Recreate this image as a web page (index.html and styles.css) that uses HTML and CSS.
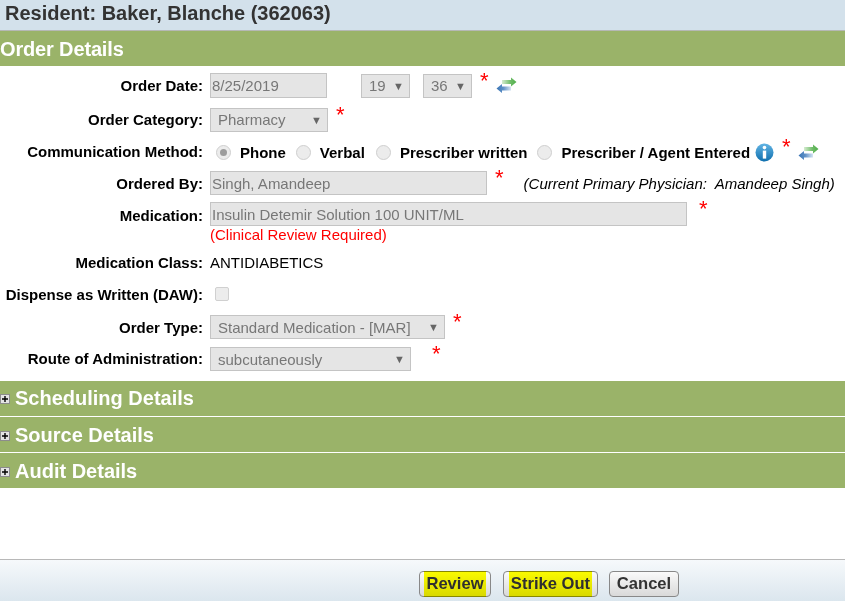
FILE: index.html
```html
<!DOCTYPE html>
<html lang="en">
<head>
  <meta charset="UTF-8">
  <title>Order Details</title>
  <link rel="stylesheet" href="styles.css">
</head>
<body>
  <svg class="defs" width="0" height="0">
    <defs>
      <linearGradient id="greenFade" x1="0" x2="1" y1="0" y2="0">
        <stop offset="0" stop-color="#d5ecd0"/>
        <stop offset="0.6" stop-color="#6dbb66"/>
        <stop offset="1" stop-color="#4eae4a"/>
      </linearGradient>
      <linearGradient id="blueFade" x1="0" x2="1" y1="0" y2="0">
        <stop offset="0" stop-color="#3a74b4"/>
        <stop offset="0.45" stop-color="#5d8fc6"/>
        <stop offset="1" stop-color="#d6e4f2"/>
      </linearGradient>
      <linearGradient id="infoFill" x1="0" x2="0" y1="0" y2="1">
        <stop offset="0" stop-color="#62b4e4"/>
        <stop offset="1" stop-color="#0f6fae"/>
      </linearGradient>
      <symbol id="swap" viewBox="0 0 22 18">
        <path d="M6 4h9V1.5l5.5 4.5-5.5 4.5V8H6z" fill="url(#greenFade)"/>
        <path d="M15 10.5H6V8L0.5 12.5 6 17v-2.5h9z" fill="url(#blueFade)"/>
      </symbol>
      <symbol id="plus" viewBox="0 0 10 10">
        <rect x="0.5" y="0.5" width="9" height="9" fill="#e4e4e4" stroke="#8c8c8c"/>
        <path d="M2 5h6M5 2v6" stroke="#000" stroke-width="1.4"/>
      </symbol>
    </defs>
  </svg>

  <header class="resident">Resident: Baker, Blanche (362063)</header>

  <section class="panel-head open low">Order Details</section>

  <form class="order-form">
    <div class="row row-date">
      <label>Order Date:</label>
      <div class="field">
        <input class="txt w-date" type="text" value="8/25/2019" disabled>
        <div class="sel w-time first"><span>19</span><i>▼</i></div>
        <div class="sel w-time"><span>36</span><i>▼</i></div>
        <span class="req up">*</span>
        <svg class="swap" width="22" height="18"><use href="#swap"/></svg>
      </div>
    </div>
    <div class="row row-cat">
      <label>Order Category:</label>
      <div class="field">
        <div class="sel w-cat"><span>Pharmacy</span><i>▼</i></div>
        <span class="req up">*</span>
      </div>
    </div>
    <div class="row row-comm">
      <label>Communication Method:</label>
      <div class="field radios">
        <span class="radio on"></span><b class="r1">Phone</b>
        <span class="radio"></span><b class="r2">Verbal</b>
        <span class="radio"></span><b class="r3">Prescriber written</b>
        <span class="radio"></span><b class="r4">Prescriber / Agent Entered</b>
        <svg class="info" width="19" height="19" viewBox="0 0 19 19">
          <circle cx="9.5" cy="9.5" r="9" fill="url(#infoFill)"/>
          <circle cx="9.5" cy="4.6" r="1.8" fill="#fff"/>
          <rect x="7.8" y="7.6" width="3.4" height="8" fill="#fff"/>
        </svg>
        <span class="req up">*</span>
        <svg class="swap" width="22" height="18"><use href="#swap"/></svg>
      </div>
    </div>
    <div class="row row-by">
      <label>Ordered By:</label>
      <div class="field">
        <input class="txt w-by" type="text" value="Singh, Amandeep" disabled>
        <span class="req up">*</span>
        <em class="note">(Current Primary Physician:&nbsp; Amandeep Singh)</em>
      </div>
    </div>
    <div class="row row-med">
      <label>Medication:</label>
      <div class="field">
        <input class="txt w-med" type="text" value="Insulin Detemir Solution 100 UNIT/ML" disabled>
        <span class="req up far">*</span>
      </div>
    </div>
    <div class="row row-review">
      <label></label>
      <div class="field clinical">(Clinical Review Required)</div>
    </div>
    <div class="row row-class">
      <label>Medication Class:</label>
      <div class="field plain">ANTIDIABETICS</div>
    </div>
    <div class="row row-daw">
      <label>Dispense as Written (DAW):</label>
      <div class="field"><span class="check"></span></div>
    </div>
    <div class="row row-type">
      <label>Order Type:</label>
      <div class="field">
        <div class="sel w-type"><span>Standard Medication - [MAR]</span><i>▼</i></div>
        <span class="req up">*</span>
      </div>
    </div>
    <div class="row row-route">
      <label>Route of Administration:</label>
      <div class="field">
        <div class="sel w-route"><span>subcutaneously</span><i>▼</i></div>
        <span class="req up wide">*</span>
      </div>
    </div>
  </form>

  <section class="panel-head"><svg width="10" height="10"><use href="#plus"/></svg>Scheduling Details</section>
  <section class="panel-head low"><svg width="10" height="10"><use href="#plus"/></svg>Source Details</section>
  <section class="panel-head low"><svg width="10" height="10"><use href="#plus"/></svg>Audit Details</section>

  <footer class="actions">
    <button type="button" class="btn b-review"><span class="mark">Review</span></button>
    <button type="button" class="btn b-strike"><span class="mark">Strike Out</span></button>
    <button type="button" class="btn b-cancel">Cancel</button>
  </footer>
</body>
</html>
```

FILE: styles.css
```css
html, body { height: 100%; }
body { margin: 0; font-family: "Liberation Sans", Arial, sans-serif; font-size: 15px; color: #000; background: #fff; display: flex; flex-direction: column; overflow: hidden; }
.defs { position: absolute; }

.resident { height: 30px; line-height: 27px; padding-left: 5px; background: #d3e1eb; border-bottom: 1px solid #b5b8b5; color: #333; font-size: 20px; font-weight: bold; flex: none; }

.panel-head { flex: none; box-sizing: border-box; height: 35px; margin-bottom: 1px; background: #9ab369; color: #fff; font-size: 20px; font-weight: bold; display: flex; align-items: center; }
.panel-head svg { margin-right: 5px; }
.panel-head.low { padding-top: 2px; }
.panel-head.open { margin-bottom: 0; letter-spacing: -0.15px; }

.order-form { flex: none; height: 315px; box-sizing: border-box; }
.row { display: grid; grid-template-columns: 203px 1fr; column-gap: 7px; align-items: center; }
.row label { text-align: right; font-weight: bold; white-space: nowrap; }
.field { display: flex; align-items: center; height: 100%; }

.row-date { height: 25px; margin-top: 7px; }
.row-cat { height: 24px; margin-top: 10px; }
.row-cat label { padding-bottom: 2px; }
.row-comm { height: 20px; margin-top: 9px; }
.row-comm label { padding-bottom: 1px; }
.row-by { height: 24px; margin-top: 10px; }
.row-med { height: 24px; margin-top: 7px; }
.row-med label { padding-top: 2px; }
.row-review { height: 16px; }
.row-class { height: 18px; margin-top: 11px; }
.row-daw { height: 18px; margin-top: 13px; }
.row-daw label { padding-top: 2px; }
.row-type { height: 24px; margin-top: 13px; }
.row-route { height: 24px; margin-top: 8px; }
.row-route label { padding-bottom: 1px; }

.txt, .sel { box-sizing: border-box; height: 100%; background: #e5e5e5; border: 1px solid #c4c4c4; color: #777; font-family: inherit; font-size: 15px; margin: 0; }
.txt { padding: 0 1px; }
.sel { display: flex; align-items: center; justify-content: space-between; padding: 0 5px 0 7px; }
.sel i { font-style: normal; font-size: 11px; color: #666; }
.w-date { width: 117px; }
.w-time { width: 49px; height: 24px; margin-left: 13px; }
.w-time.first { margin-left: 34px; }
.w-cat { width: 118px; }
.w-cat span { padding-bottom: 1px; }
.w-by { width: 277px; }
.w-med { width: 477px; }
.w-type { width: 235px; }
.w-route { width: 201px; }

.req { color: #f00; font-size: 22px; font-weight: normal; line-height: 1; margin-left: 8px; }
.req.up { position: relative; top: -5px; }
.req.wide { margin-left: 21px; }
.req.far { margin-left: 12px; }
.swap { margin-left: 7px; margin-top: -1px; }

.radios b { font-weight: bold; }
.radio { width: 13px; height: 13px; border-radius: 50%; background: #ececec; border: 1px solid #cfcfcf; position: relative; flex: none; margin-left: 6px; }
.radio.on::after { content: ""; position: absolute; left: 3px; top: 3px; width: 7px; height: 7px; border-radius: 50%; background: #9c9c9c; }
.r1, .r2, .r3, .r4 { margin-left: 9px; margin-right: 4px; }
.r2 { margin-right: 5px; }
.info { margin-left: 1px; }

.note { margin-left: 20px; font-size: 15px; color: #000; white-space: nowrap; }
.clinical { color: #f00; }
.plain { color: #000; }
.check { width: 12px; height: 12px; margin-left: 5px; border: 1px solid #d0d0d0; border-radius: 2px; background: #ececec; }

.actions { margin-top: auto; flex: none; height: 42px; box-sizing: border-box; border-top: 1px solid #b8b8b8; background: linear-gradient(#f6f9fb, #dbe6ee); display: flex; align-items: flex-start; padding: 11px 0 0 419px; }
.btn { box-sizing: border-box; height: 26px; padding: 0; border: 1px solid #888; border-radius: 4px; background: linear-gradient(#fafafa, #d9d9d9); color: #333; font-family: inherit; font-size: 16.6px; font-weight: bold; line-height: 22px; }
.b-review { width: 72px; margin-right: 12px; }
.b-strike { width: 95px; margin-right: 11px; }
.b-cancel { width: 70px; }
.mark { background: #ffff00; padding: 3px 2px 4px; color: #333; mix-blend-mode: multiply; }
```
